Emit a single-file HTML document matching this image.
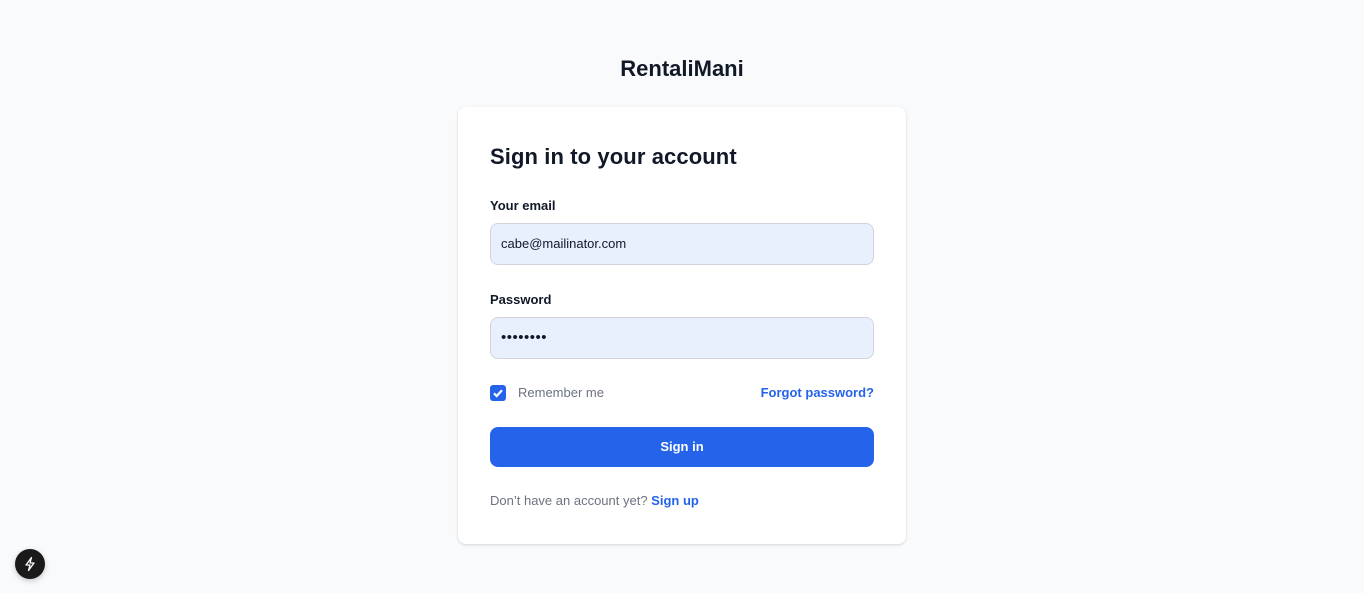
<!DOCTYPE html>
<html><head><meta charset="utf-8"><style>
*{box-sizing:border-box;margin:0;padding:0}
body{width:1364px;height:593px;background:#f9fafb;font-family:"Liberation Sans",sans-serif;position:relative;overflow:hidden;color:#111827}
.logo{position:absolute;top:56px;left:0;width:1364px;text-align:center;font-size:22px;font-weight:700;color:#111827}
.card{position:absolute;left:458px;top:107px;width:448px;height:437px;background:#fff;border-radius:8px;box-shadow:0 1px 3px rgba(0,0,0,.1),0 1px 2px rgba(0,0,0,.06)}
h1{position:absolute;left:32px;top:37px;font-size:22px;font-weight:700;letter-spacing:0.1px}
.lbl{position:absolute;left:32px;font-size:13px;font-weight:600}
.inp{position:absolute;left:32px;width:384px;height:42px;background:#e8f0fe;border:1px solid #d1d5db;border-radius:8px;font-size:13px;padding:0 10px;line-height:40px}
.cb{position:absolute;left:32px;top:278px;width:16px;height:16px;background:#2563eb;border-radius:3px}
.rm{position:absolute;left:60px;top:278px;font-size:13px;color:#6b7280}
.fp{position:absolute;right:32px;top:278px;font-size:13px;font-weight:600;color:#2563eb}
.btn{position:absolute;left:32px;top:320px;width:384px;height:40px;background:#2563eb;border-radius:8px;color:#fff;font-size:13px;font-weight:600;text-align:center;line-height:40px}
.su{position:absolute;left:32px;top:386px;font-size:13px;color:#6b7280}
.su b{color:#2563eb;font-weight:600}
.nx{position:absolute;left:15px;top:549px;width:30px;height:30px;border-radius:50%;background:#1a1a1a;box-shadow:0 2px 6px rgba(0,0,0,.2)}
</style></head><body>
<div class="logo">RentaliMani</div>
<div class="card">
<h1>Sign in to your account</h1>
<div class="lbl" style="top:91px">Your email</div>
<div class="inp" style="top:116px">cabe@mailinator.com</div>
<div class="lbl" style="top:185px">Password</div>
<div class="inp" style="top:210px;font-size:15px;letter-spacing:0.5px">••••••••</div>
<div class="cb"><svg width="16" height="16" viewBox="0 0 16 16"><path d="M4 8.3l2.7 2.7L12 5.2" stroke="#fff" stroke-width="2.2" fill="none"/></svg></div>
<div class="rm">Remember me</div>
<div class="fp">Forgot password?</div>
<div class="btn">Sign in</div>
<div class="su">Don’t have an account yet? <b>Sign up</b></div>
</div>
<div class="nx"><svg width="30" height="30" viewBox="0 0 30 30"><path d="M16.5 8.5L11 16h4l-1.5 5.5L19 14h-4z" stroke="#fff" stroke-width="1.3" fill="none" stroke-linejoin="round"/></svg></div>
</body></html>
